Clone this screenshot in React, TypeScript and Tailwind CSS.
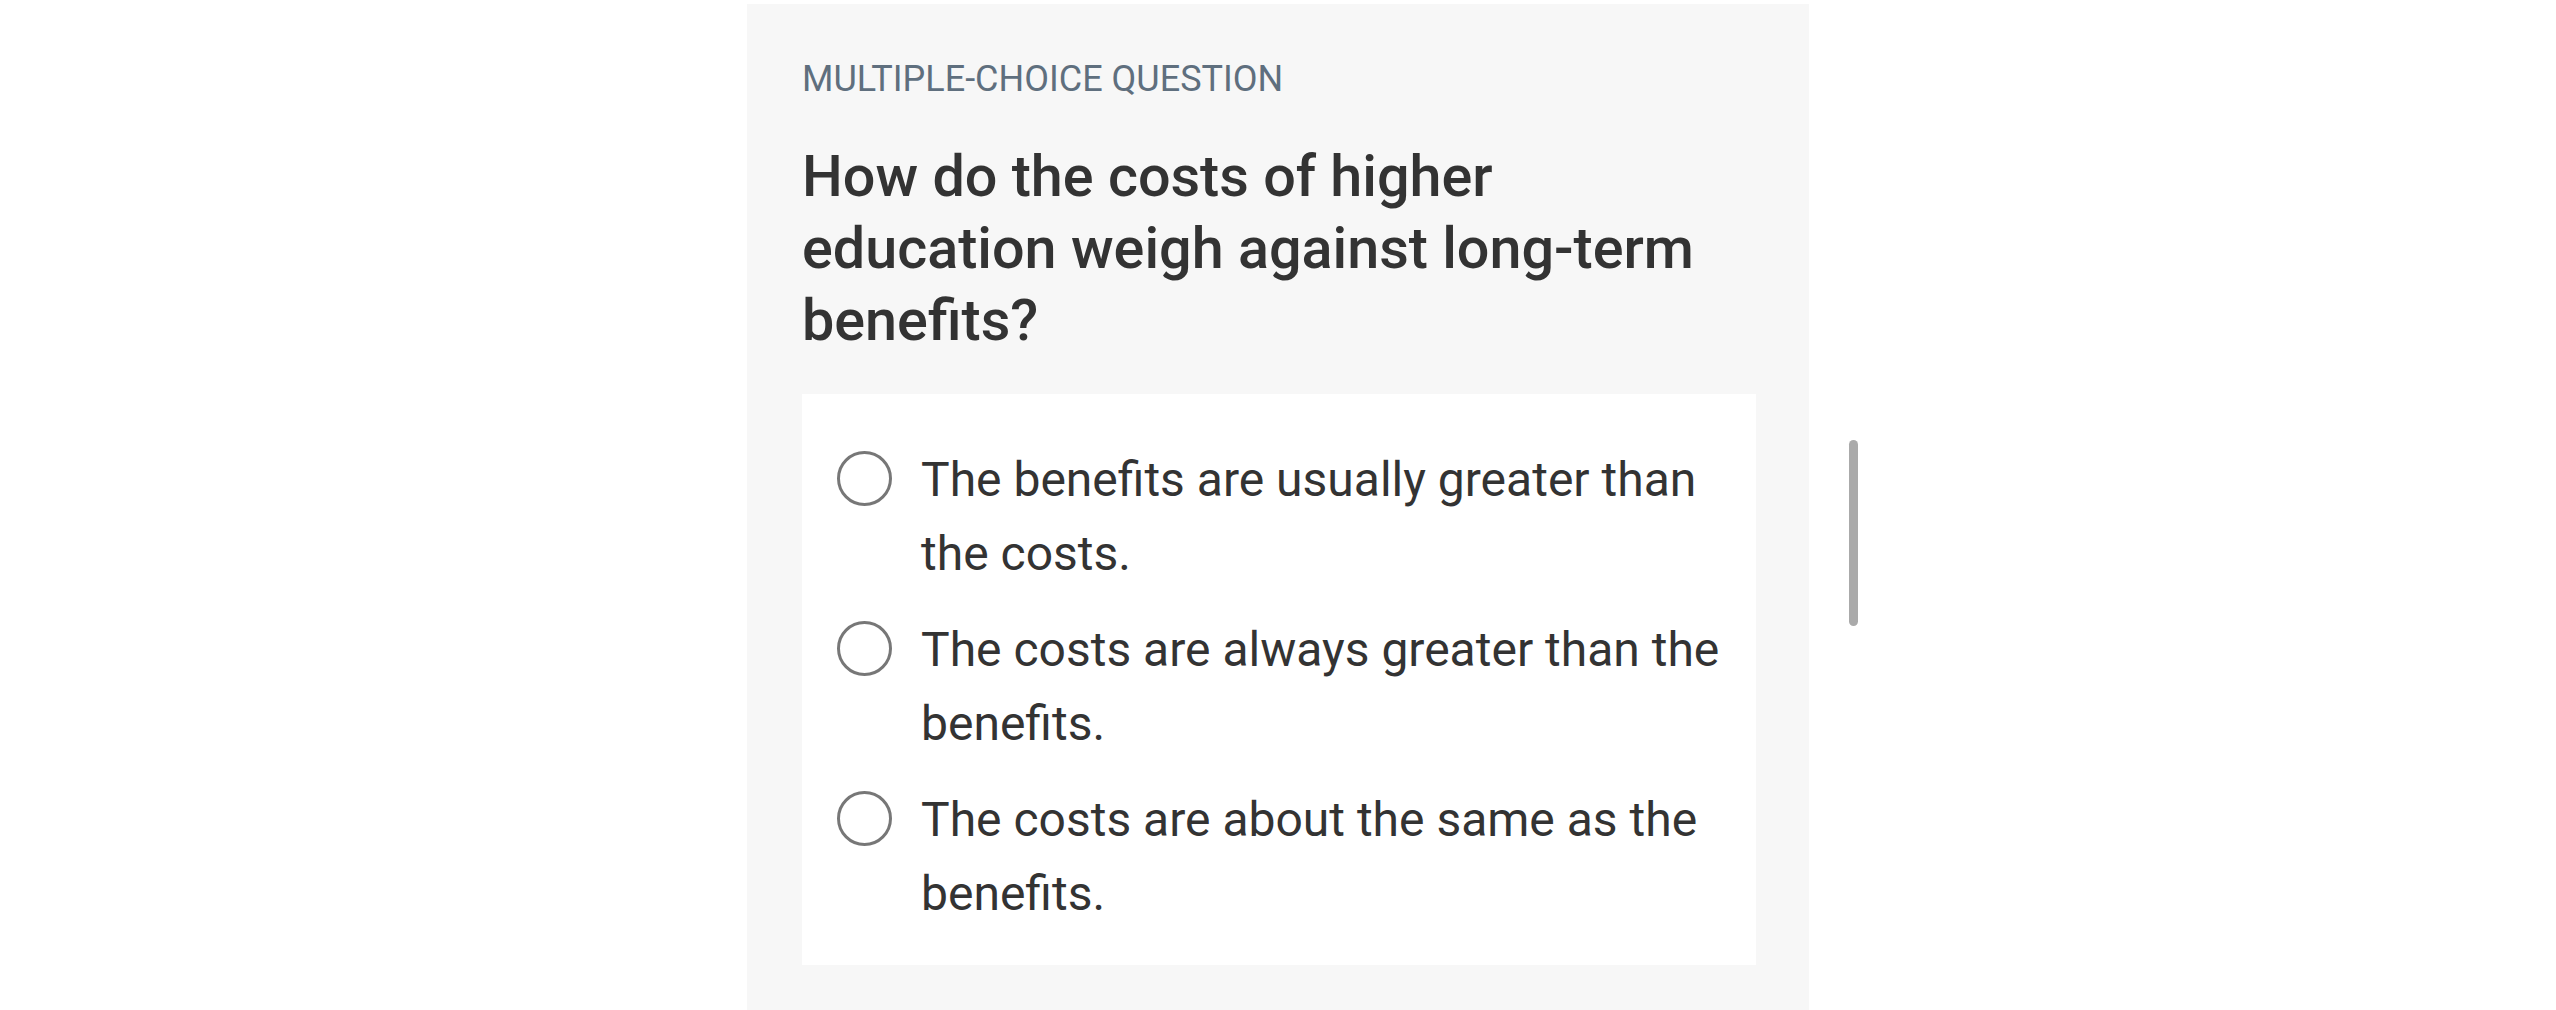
import React, { useState } from "react"

const options = [
  "The benefits are usually greater than the costs.",
  "The costs are always greater than the benefits.",
  "The costs are about the same as the benefits.",
]

export default function App() {
  const [selected, setSelected] = useState<number | null>(null)

  return (
    <div className="min-h-[1010px] bg-white pt-[4px] font-['Roboto',sans-serif]">
      <div className="relative mx-auto w-[1062px]">
        <div className="min-h-[1006px] bg-[#f7f7f7] pb-[40px] pl-[55px] pr-[53px] pt-[55px]">
          <p className="text-[36px] leading-[40px] text-[#5f6f7e]">MULTIPLE-CHOICE QUESTION</p>
          <h1 className="mt-[42px] max-w-[940px] text-[57.5px] font-medium leading-[72px] text-[#333333]">
            How do the costs of higher education weigh against long-term benefits?
          </h1>

          <div className="mt-[37px] flex flex-col gap-[22px] bg-white pb-[34px] pl-[35px] pr-[30px] pt-[49px]">
            {options.map((opt, i) => (
              <label key={i} className="flex cursor-pointer items-start gap-[29px]">
                <span
                  onClick={() => setSelected(i)}
                  className="mt-[8px] flex h-[55px] w-[55px] shrink-0 items-center justify-center rounded-full border-[3px] border-[#777777]"
                >
                  {selected === i && <span className="h-[30px] w-[30px] rounded-full bg-[#777777]" />}
                </span>
                <span className="text-[48px] leading-[74px] text-[#333333]">{opt}</span>
              </label>
            ))}
          </div>
        </div>

        <div className="absolute left-[1102px] top-[436px] h-[186px] w-[9px] rounded-full bg-[#aaaaaa]" />
      </div>
    </div>
  )
}
